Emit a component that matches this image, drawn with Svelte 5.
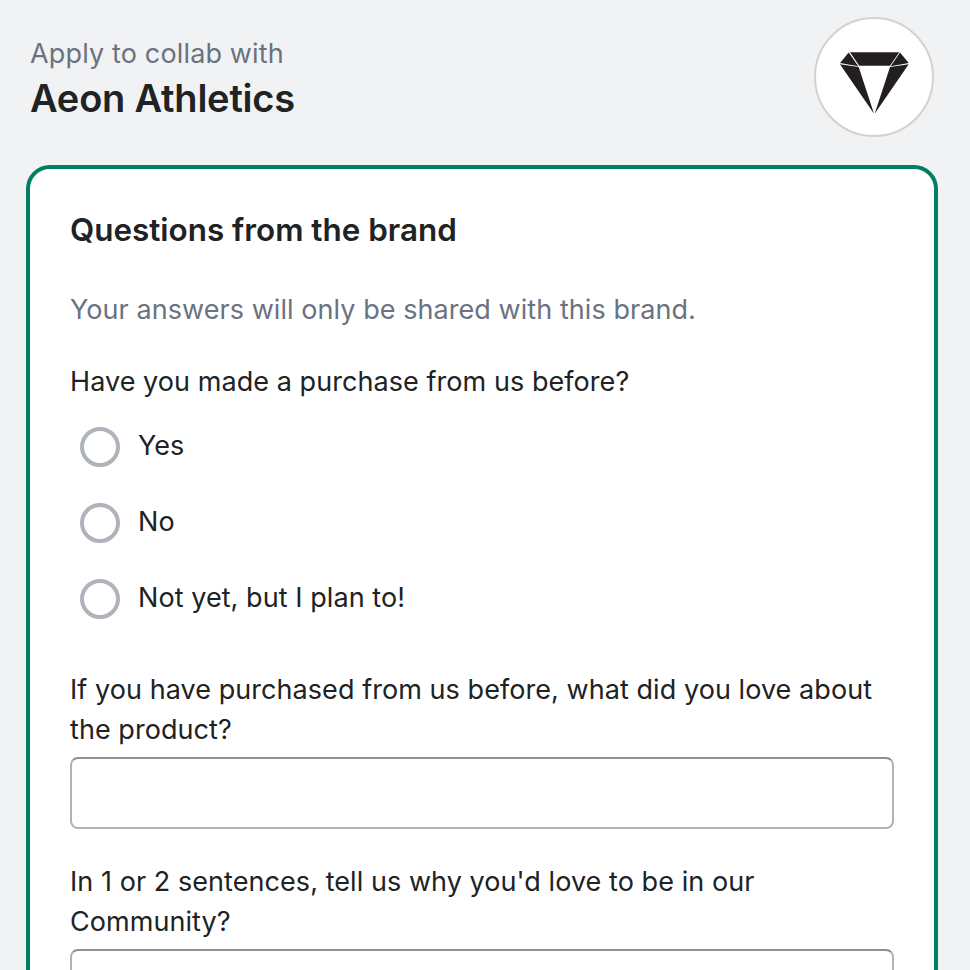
<script>
  const options = ['Yes', 'No', 'Not yet, but I plan to!'];
</script>

<div class="page">
  <header class="head">
    <div class="titles">
      <p class="sub">Apply to collab with</p>
      <h1>Aeon Athletics</h1>
    </div>
    <div class="logo">
      <svg viewBox="0 0 116 116" width="116" height="116" aria-hidden="true">
        <path fill="#231f20" d="M34 33.3 L83.3 33.3 L74 46.7 L43.3 46.7 Z" />
        <path fill="#231f20" d="M32.7 33.5 L24 44 L42.3 47.3 Z" />
        <path fill="#231f20" d="M84 33.5 L92.7 44 L74.7 47.3 Z" />
        <path fill="#231f20" d="M24 45.3 L42.7 48 L58 94.7 Z" />
        <path fill="#231f20" d="M92.7 45.3 L74 48 L58.7 94.7 Z" />
      </svg>
    </div>
  </header>

  <main class="card">
    <h2>Questions from the brand</h2>
    <p class="note">Your answers will only be shared with this brand.</p>

    <div class="question">
      <p class="label">Have you made a purchase from us before?</p>
      <div class="radios">
        {#each options as option}
          <label class="radio">
            <input type="radio" name="purchase" />
            <span>{option}</span>
          </label>
        {/each}
      </div>
    </div>

    <div class="field">
      <label for="love">If you have purchased from us before, what did you love about the product?</label>
      <input id="love" type="text" />
    </div>

    <div class="field">
      <label for="why">In 1 or 2 sentences, tell us why you'd love to be in our Community?</label>
      <input id="why" type="text" />
    </div>
  </main>
</div>

<style>
  :global(body) {
    margin: 0;
    background: #f1f2f4;
  }
  .page {
    height: 970px;
    overflow: hidden;
    box-sizing: border-box;
    padding: 17px 32px 0 26px;
    font-family: Inter, "Liberation Sans", sans-serif;
    color: #202223;
    background: #f1f2f4;
  }
  .head {
    display: flex;
    justify-content: space-between;
    align-items: flex-start;
    padding: 0 4px;
    margin-bottom: 28px;
  }
  .titles {
    padding-top: 17px;
  }
  .sub {
    margin: 0;
    font-size: 27px;
    line-height: 40px;
    letter-spacing: 0.15px;
    color: #6b7280;
  }
  h1 {
    margin: 0;
    font-size: 38px;
    line-height: 48px;
    font-weight: 600;
    letter-spacing: -0.2px;
  }
  .logo {
    width: 120px;
    height: 120px;
    box-sizing: border-box;
    border: 2px solid #d2d2d2;
    border-radius: 50%;
    background: #fff;
    display: flex;
    align-items: center;
    justify-content: center;
  }
  .logo svg {
    display: block;
    flex: none;
  }
  .card {
    box-sizing: border-box;
    height: 900px;
    background: #fff;
    border: 4px solid #008060;
    border-radius: 24px;
    padding: 41px 40px 0;
    font-size: 27px;
    line-height: 40px;
    letter-spacing: 0.06px;
  }
  h2 {
    margin: 0;
    font-size: 31.4px;
    line-height: 40px;
    font-weight: 600;
    letter-spacing: 0;
  }
  .note {
    margin: 40px 0 0;
    color: #6b7280;
  }
  .question {
    margin-top: 32px;
  }
  .label {
    margin: 0;
  }
  .radios {
    display: flex;
    flex-direction: column;
    gap: 36px;
    margin-top: 25px;
    padding-left: 10px;
  }
  .radio {
    display: flex;
    align-items: center;
    gap: 18px;
    height: 40px;
  }
  .radio span {
    margin-bottom: 2px;
  }
  .radio input {
    appearance: none;
    margin: 0;
    width: 40px;
    height: 40px;
    box-sizing: border-box;
    border: 4px solid #aeb4b9;
    border-radius: 50%;
    background: #fff;
  }
  .field {
    margin-top: 51px;
  }
  .field + .field {
    margin-top: 33px;
  }
  .field label {
    display: block;
  }
  .field input {
    display: block;
    box-sizing: border-box;
    width: 100%;
    height: 72px;
    margin-top: 7px;
    background: #fff;
    border: 2px solid #aeb4b9;
    border-top-color: #898f94;
    border-radius: 8px;
  }
</style>
